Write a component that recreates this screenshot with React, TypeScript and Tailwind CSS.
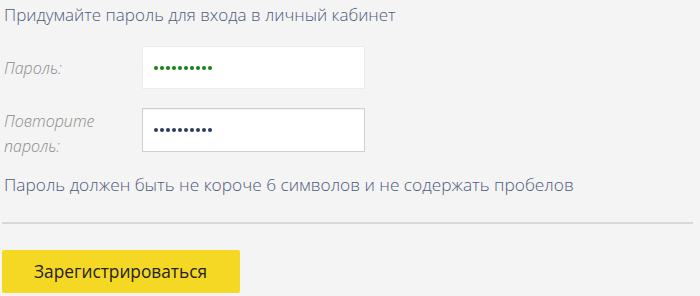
import React from "react";

function Dots({ color }: { color: string }) {
  return (
    <div className="flex gap-[2px]">
      {Array.from({ length: 10 }).map((_, i) => (
        <div key={i} className={`w-[4px] h-[4px] rounded-full ${color}`} />
      ))}
    </div>
  );
}

export default function App() {
  return (
    <div className="w-[700px] h-[296px] bg-[#f4f4f4] overflow-hidden" style={{ fontFamily: '"Open Sans", sans-serif' }}>
      <div className="pl-[4px] pt-[3px] text-[17px] leading-[24px] text-[#4f5b7b] font-light">
        Придумайте пароль для входа в личный кабинет
      </div>
      <div className="mt-[19px] flex items-center">
        <div className="w-[142px] pl-[4px] text-[16px] italic font-light text-[#8a8a8a]">Пароль:</div>
        <div className="w-[223px] h-[43px] bg-white border border-[#ececec] flex items-center pl-[11px]">
          <Dots color="bg-[#138213]" />
        </div>
      </div>
      <div className="mt-[19px] flex items-start">
        <div className="w-[142px] pl-[4px] pt-[1px] text-[16px] leading-[25px] italic font-light text-[#8a8a8a]">
          Повторите
          <br />
          пароль:
        </div>
        <div className="w-[223px] h-[44px] bg-white border border-[#cfcfcf] flex items-center pl-[11px] shadow-[inset_0_1px_1px_rgba(0,0,0,0.05)]">
          <Dots color="bg-[#2c3a5e]" />
        </div>
      </div>
      <div className="mt-[14px] pl-[4px] text-[17.3px] leading-[24px] text-[#4f5b7b] font-light">
        Пароль должен быть не короче 6 символов и не содержать пробелов
      </div>
      <div className="mt-[25px] ml-[2px] w-[691px] h-[2px] bg-[#d8d8d8]" />
      <div className="mt-[26px] ml-[2px] w-[238px] h-[43px] bg-[#f5d823] rounded-[2px] flex items-center pl-[32px] text-[17.3px] text-[#222]">
        Зарегистрироваться
      </div>
    </div>
  );
}
